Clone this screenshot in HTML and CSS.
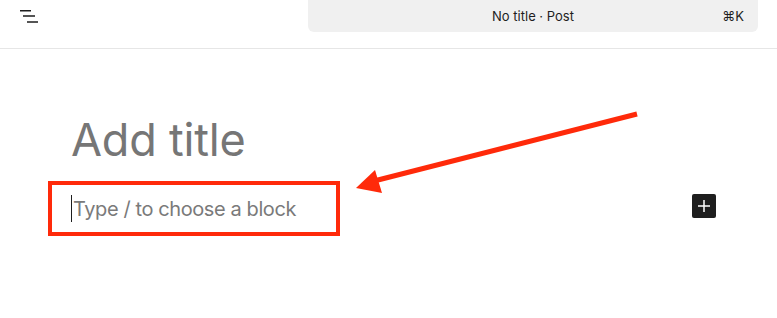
FILE: index.html
```html
<!DOCTYPE html>
<html>
<head>
<meta charset="utf-8">
<link rel="stylesheet" href="styles.css">
</head>
<body>
<div class="app">
  <header class="header">
    <button class="menu-btn" aria-label="Document overview">
      <svg width="24" height="24" viewBox="0 0 24 24"><path d="M0 4.75h11M3 10h12M7 16h11" stroke="#1e1e1e" stroke-width="1.5" fill="none"/></svg>
    </button>
    <div class="command-bar">
      <span class="doc-title">No title · Post</span>
      <span class="shortcut">⌘K</span>
    </div>
  </header>
  <main class="canvas">
    <h1 class="post-title">Add title</h1>
    <div class="block-row">
      <div class="highlight">
        <span class="caret"></span><span class="placeholder">Type / to choose a block</span>
      </div>
      <button class="inserter" aria-label="Add block">
        <svg width="14" height="14" viewBox="0 0 14 14"><path d="M7 1v12M1 7h12" stroke="#fff" stroke-width="1.5"/></svg>
      </button>
    </div>
  </main>
  <svg class="arrow" width="777" height="318" viewBox="0 0 777 318">
    <line x1="637" y1="114" x2="374" y2="181" stroke="#ff2a0a" stroke-width="5"/>
    <polygon points="356,188 375,170 382,193" fill="#ff2a0a"/>
  </svg>
</div>
</body>
</html>
```
FILE: styles.css
```css
* { box-sizing: border-box; }
html, body { margin: 0; padding: 0; background: #fff; }
body { font-family: Inter, "Noto Sans", sans-serif; width: 777px; height: 318px; overflow: hidden; }
.app { position: relative; width: 777px; height: 318px; }
.header {
  height: 49px;
  border-bottom: 1px solid #e6e6e6;
  display: flex;
  align-items: flex-start;
}
.menu-btn {
  width: 48px; height: 32px;
  border: 0; background: none; padding: 6px 0 0 20px;
  margin-right: 260px;
  display: flex; align-items: flex-start;
}
.command-bar {
  flex: 1;
  margin-right: 19px;
  height: 32px;
  background: #f0f0f0;
  border-radius: 0 0 6px 6px;
  display: flex;
  align-items: center;
  justify-content: center;
  position: relative;
  font-size: 13px;
  color: #1e1e1e;
}
.shortcut {
  position: absolute;
  right: 14px;
  top: 8px;
  font-size: 13px;
  color: #1e1e1e;
}
.canvas { padding: 0 0 0 48px; }
.post-title {
  margin: 0;
  padding: 63px 0 0 23px;
  font-size: 45px;
  font-weight: 400;
  line-height: 56px;
  color: #767676;
  letter-spacing: -0.2px;
}
.block-row {
  margin-top: 13px;
  display: flex;
  align-items: flex-start;
}
.highlight {
  width: 292px;
  height: 55px;
  border: 4px solid #ff2a0a;
  display: flex;
  align-items: center;
  padding-left: 19px;
}
.caret {
  width: 1px; height: 27px; background: #1e1e1e; margin-right: 1px;
}
.placeholder {
  font-size: 20px;
  color: #7a7a7a;
  letter-spacing: -0.4px;
}
.inserter {
  margin: 13px 0 0 352px;
  width: 24px; height: 24px;
  border: 0; border-radius: 2px;
  background: #1e1e1e;
  display: flex; align-items: center; justify-content: center;
  padding: 0;
}
.arrow { position: absolute; left: 0; top: 0; pointer-events: none; }
```
